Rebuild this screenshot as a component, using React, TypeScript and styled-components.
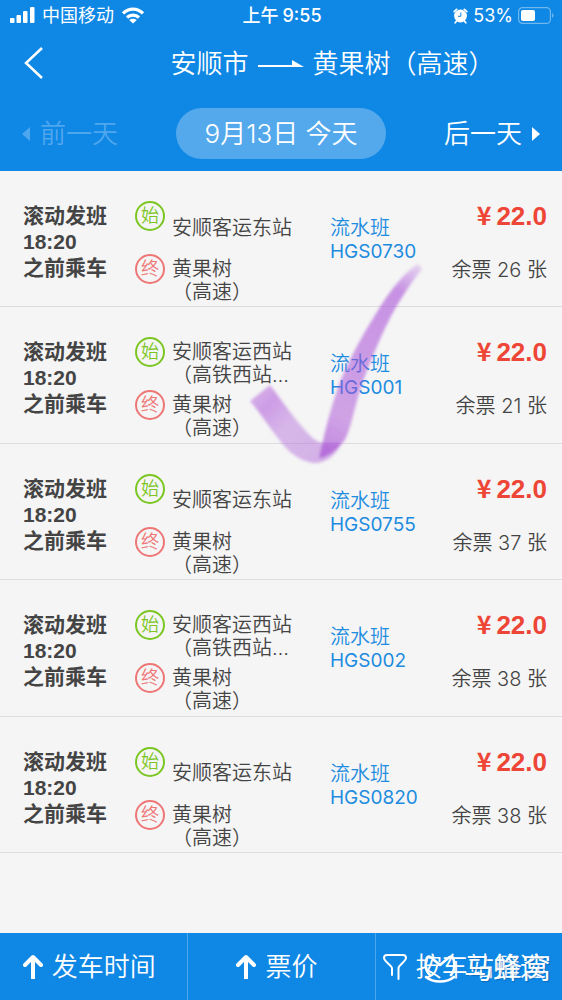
import React from 'react';
import styled, { createGlobalStyle } from 'styled-components';

const BLUE = '#0e87e5';
const SANS = 'Inter, "Noto Sans CJK SC", sans-serif';
const ARIAL = '"Liberation Sans", "Noto Sans CJK SC", sans-serif';

const GlobalStyle = createGlobalStyle`
  * { box-sizing: border-box; }
  body { margin: 0; background: #f5f5f5; font-family: ${SANS}; color: #444; }
  button { font: inherit; color: inherit; background: none; border: 0; padding: 0; margin: 0; cursor: pointer; }
  h1, p, ul { margin: 0; padding: 0; }
  ul { list-style: none; }
  svg { display: block; flex: none; }
`;

const Page = styled.div`
  min-height: 100vh;
  display: flex;
  flex-direction: column;
`;

const Header = styled.header`
  background: ${BLUE};
  color: #fff;
  padding-bottom: 12px;
`;

const StatusBar = styled.div`
  display: grid;
  grid-template-columns: 1fr auto 1fr;
  align-items: center;
  height: 30px;
  padding: 1px 8px 0 10px;
  font-size: 18px;
  line-height: 29px;
`;

const StatusGroup = styled.div<{ $end?: boolean }>`
  display: flex;
  align-items: center;
  justify-content: ${p => (p.$end ? 'flex-end' : 'flex-start')};
  gap: ${p => (p.$end ? '5px' : '7px')};
`;

const Clock = styled.time`
  display: flex;
  gap: 4px;
  font-size: 18px;
  font-weight: 500;
`;

const TitleBar = styled.div`
  display: grid;
  grid-template-columns: 90px 1fr;
  align-items: center;
  height: 66px;
  padding-left: 23px;
`;

const Title = styled.h1`
  display: flex;
  align-items: center;
  justify-content: center;
  gap: 8px;
  padding: 2px 10px 0 0;
  font-size: 26px;
  font-weight: 350;
  line-height: 36px;
`;

const DateBar = styled.nav`
  display: grid;
  grid-template-columns: 1fr auto 1fr;
  align-items: center;
  margin-top: 12px;
  padding: 0 22px;
  font-size: 26px;
  font-weight: 350;
`;

const DayButton = styled.button<{ $end?: boolean }>`
  display: flex;
  align-items: center;
  gap: 10px;
  justify-self: ${p => (p.$end ? 'end' : 'start')};

  &:disabled { color: #4ea6ee; }
`;

const Day = styled.span`
  padding-bottom: 4px;
`;

const DatePill = styled.button`
  height: 51px;
  padding: 0 29px 4px;
  border-radius: 26px;
  background: #54a9ec;
`;

const Main = styled.main`
  position: relative;
  flex: 1;
`;

const TripList = styled.ul`
  display: grid;
  grid-auto-rows: 1fr;
  min-height: 682px;
`;

const Trip = styled.li`
  display: grid;
  grid-template-columns: 112px 195px 1fr auto;
  align-items: start;
  padding: 30px 15px 0 23px;
  border-bottom: 1px solid #dcdcdc;
`;

const Departure = styled.p`
  padding-top: 2px;
  font: bold 21px/26px ${ARIAL};
`;

const Stops = styled.div`
  display: grid;
  gap: 3px;
`;

const Stop = styled.div`
  display: grid;
  grid-template-columns: 30px auto;
  justify-content: start;
  align-items: start;
  gap: 7px;
  min-height: 50px;
`;

const Badge = styled.span<{ $color: string }>`
  display: grid;
  place-items: center;
  width: 30px;
  height: 30px;
  border: 2px solid ${p => p.$color};
  border-radius: 50%;
  color: ${p => p.$color};
  font-size: 18px;
  font-weight: 350;
  line-height: 18px;
`;

const Station = styled.span`
  align-self: center;
  padding-top: 4px;
  font-size: 20px;
  line-height: 23px;
  font-weight: 350;
  white-space: pre-line;
`;

const Train = styled.p`
  padding-top: 16px;
  color: #1d8ce0;
  font-size: 20px;
  line-height: 23px;
  font-weight: 350;
`;

const Code = styled.span`
  display: block;
  font-size: 19px;
  font-weight: 400;
`;

const Fare = styled.div`
  display: grid;
  gap: 24px;
  text-align: right;
`;

const Price = styled.strong`
  display: flex;
  justify-content: flex-end;
  gap: 5px;
  font: bold 26px/30px ${ARIAL};
  color: #ee4636;
`;

const Yen = styled.span`
  font-family: "Noto Sans CJK SC", sans-serif;
  font-size: 25px;
  line-height: 26px;
`;

const Left = styled.span`
  font-size: 20px;
  line-height: 30px;
  font-weight: 350;
`;

const Mark = styled.svg`
  position: absolute;
  left: 240px;
  top: 84px;
  pointer-events: none;
`;

const Footer = styled.footer`
  position: relative;
  display: grid;
  grid-template-columns: repeat(3, 1fr);
  height: 67px;
  background: ${BLUE};
  color: #fff;
`;

const SortButton = styled.button`
  display: flex;
  align-items: center;
  justify-content: center;
  gap: 9px;
  padding: 0 9px 0 0;
  font-size: 26px;
  line-height: 36px;
  font-weight: 350;
  white-space: nowrap;

  & + & { border-left: 1px solid #4da6ec; }
`;

const Watermark = styled.div`
  position: absolute;
  right: 11px;
  bottom: 11px;
  display: flex;
  align-items: center;
  gap: 8px;
  font-size: 29px;
  line-height: 40px;
  text-shadow: 1px 1px 1px rgba(0, 60, 120, 0.35);
  pointer-events: none;
`;

const Triangle = ({ left }: { left?: boolean }) => (
  <svg width="8" height="14" viewBox="0 0 8 14" fill="currentColor">
    <path d={left ? 'M8 0V14L0 7Z' : 'M0 0V14L8 7Z'} />
  </svg>
);

const UpArrow = () => (
  <svg width="20" height="26" viewBox="0 0 20 26" fill="none" stroke="#fff" strokeWidth="4" strokeLinejoin="round">
    <path d="M10 25V3" />
    <path d="M2 11L10 3L18 11" strokeLinecap="round" />
  </svg>
);

interface TripData {
  from: string;
  code: string;
  seats: number;
}

const EAST = '安顺客运东站';
const WEST = '安顺客运西站\n（高铁西站…';

const trips: TripData[] = [
  { from: EAST, code: 'HGS0730', seats: 26 },
  { from: WEST, code: 'HGS001', seats: 21 },
  { from: EAST, code: 'HGS0755', seats: 37 },
  { from: WEST, code: 'HGS002', seats: 38 },
  { from: EAST, code: 'HGS0820', seats: 38 },
];

export default function App() {
  return (
    <Page>
      <GlobalStyle />
      <Header>
        <StatusBar>
          <StatusGroup>
            <svg width="25" height="17" viewBox="0 0 25 17" fill="#fff">
              <rect x="0" y="11" width="4.500" height="5" rx="1" />
              <rect x="6.500" y="8" width="4.500" height="8" rx="1" />
              <rect x="13" y="4" width="4.500" height="12" rx="1" />
              <rect x="20" y="0" width="4.500" height="16" rx="1" />
            </svg>
            <span>中国移动</span>
            <svg width="24" height="17" viewBox="0 0 24 17" fill="none" stroke="#fff" strokeWidth="3.200">
              <path d="M2 6.300C7.500 .6 16.500 .6 22 6.300" />
              <path d="M6 10.500C9.300 7.200 14.700 7.200 18 10.500" />
              <path d="M12 16.500L8.200 13C10.300 11.200 13.700 11.200 15.800 13Z" fill="#fff" stroke="none" />
            </svg>
          </StatusGroup>
          <Clock>
            <span>上午</span>
            <span>9:55</span>
          </Clock>
          <StatusGroup $end>
            <svg width="15" height="16" viewBox="0 0 15 16">
              <path d="M1.200 3.600L3.600 1.400M13.800 3.600L11.400 1.400M3.200 13.500L2.200 14.800M11.800 13.500L12.800 14.800" stroke="#fff" strokeWidth="1.800" strokeLinecap="round" />
              <circle cx="7.500" cy="8" r="6.400" fill="#fff" />
              <path d="M7.800 4.500V8.300H5" stroke={BLUE} strokeWidth="1" fill="none" />
            </svg>
            <span>53%</span>
            <svg width="36" height="17" viewBox="0 0 36 17">
              <rect x=".6" y=".6" width="31.800" height="15.800" rx="4" fill="none" stroke="#6eb7ef" strokeWidth="1.200" />
              <rect x="3" y="3" width="14" height="11" rx="2" fill="#fff" />
              <path d="M34 6C36 7 36 10 34 11Z" fill="#6eb7ef" />
            </svg>
          </StatusGroup>
        </StatusBar>
        <TitleBar>
          <button aria-label="返回">
            <svg width="20" height="32" viewBox="0 0 20 32" fill="none" stroke="#fff" strokeWidth="2.500">
              <path d="M19 1L3 16L19 31" />
            </svg>
          </button>
          <Title>
            <span>安顺市</span>
            <svg width="48" height="8" viewBox="0 0 48 8">
              <path d="M1 6H44" stroke="#fff" strokeWidth="2" />
              <path d="M35 0L47 7H35Z" fill="#fff" />
            </svg>
            <span>黄果树（高速）</span>
          </Title>
        </TitleBar>
        <DateBar>
          <DayButton disabled>
            <Triangle left />
            <Day>前一天</Day>
          </DayButton>
          <DatePill>9月13日 今天</DatePill>
          <DayButton $end>
            <Day>后一天</Day>
            <Triangle />
          </DayButton>
        </DateBar>
      </Header>

      <Main>
        <TripList>
          {trips.map(trip => (
            <Trip key={trip.code}>
              <Departure>
                滚动发班
                <br />
                18:20
                <br />
                之前乘车
              </Departure>
              <Stops>
                <Stop>
                  <Badge $color="#7cc623">始</Badge>
                  <Station>{trip.from}</Station>
                </Stop>
                <Stop>
                  <Badge $color="#ee7676">终</Badge>
                  <Station>{'黄果树\n（高速）'}</Station>
                </Stop>
              </Stops>
              <Train>
                流水班
                <Code>{trip.code}</Code>
              </Train>
              <Fare>
                <Price>
                  <Yen>¥</Yen>
                  <span>22.0</span>
                </Price>
                <Left>余票 {trip.seats} 张</Left>
              </Fare>
            </Trip>
          ))}
        </TripList>
        <Mark width="190" height="215" viewBox="240 255 190 215" aria-hidden="true">
          <defs>
            <linearGradient id="short" x1="255" y1="390" x2="325" y2="460" gradientUnits="userSpaceOnUse">
              <stop offset="0" stopColor="#b56ada" stopOpacity=".5" />
              <stop offset=".2" stopColor="#b05cda" stopOpacity=".58" />
              <stop offset=".5" stopColor="#b878dc" stopOpacity=".5" />
              <stop offset="1" stopColor="#b878dc" stopOpacity=".55" />
            </linearGradient>
            <linearGradient id="long" x1="325" y1="455" x2="420" y2="266" gradientUnits="userSpaceOnUse">
              <stop offset="0" stopColor="#a040d0" stopOpacity=".6" />
              <stop offset=".2" stopColor="#a94fd6" stopOpacity=".5" />
              <stop offset=".85" stopColor="#a548d6" stopOpacity=".58" />
              <stop offset="1" stopColor="#a548d6" stopOpacity=".2" />
            </linearGradient>
            <filter id="soft">
              <feGaussianBlur stdDeviation="1.400" />
            </filter>
          </defs>
          <g filter="url(#soft)">
            <path
              d="M250 401L270 385C283 402 293 417 305 430C310 436 315 441 322 443L341 443C337 455 325 464 313 463C303 461 298 458 290 452C276 438 263 416 250 401Z"
              fill="url(#short)"
            />
            <path
              d="M319 458C323 442 326 424 334 400C342 372 358 342 380 307C392 288 405 272 418 264L422 269C412 281 404 294 396 307C382 332 371 360 362 384C354 408 351 430 344 441C337 450 326 458 319 458Z"
              fill="url(#long)"
            />
          </g>
        </Mark>
      </Main>

      <Footer>
        <SortButton>
          <UpArrow />
          发车时间
        </SortButton>
        <SortButton>
          <UpArrow />
          票价
        </SortButton>
        <SortButton>
          <svg width="24" height="26" viewBox="0 0 24 26" fill="none" stroke="#fff" strokeWidth="2" strokeLinecap="round" strokeLinejoin="round">
            <path d="M9 21V14C9 12 1 7 1 4C1 2 2 1 4 1H20C22 1 23 2 23 4C23 7 16 11 15.500 14V25" />
          </svg>
          按车站筛选
        </SortButton>
        <Watermark>
          <svg width="32" height="28" viewBox="0 0 32 28" fill="none" stroke="#fff" strokeWidth="2.600" strokeLinecap="round" strokeLinejoin="round">
            <path d="M6 20C1 16 1 7 3 3C4 0 7 2 10 5L16 10L22 5C25 2 28 0 29 3C31 7 31 16 27 20" />
            <path d="M2 22C9 28 23 28 30 22" />
          </svg>
          马蜂窝
        </Watermark>
      </Footer>
    </Page>
  );
}
